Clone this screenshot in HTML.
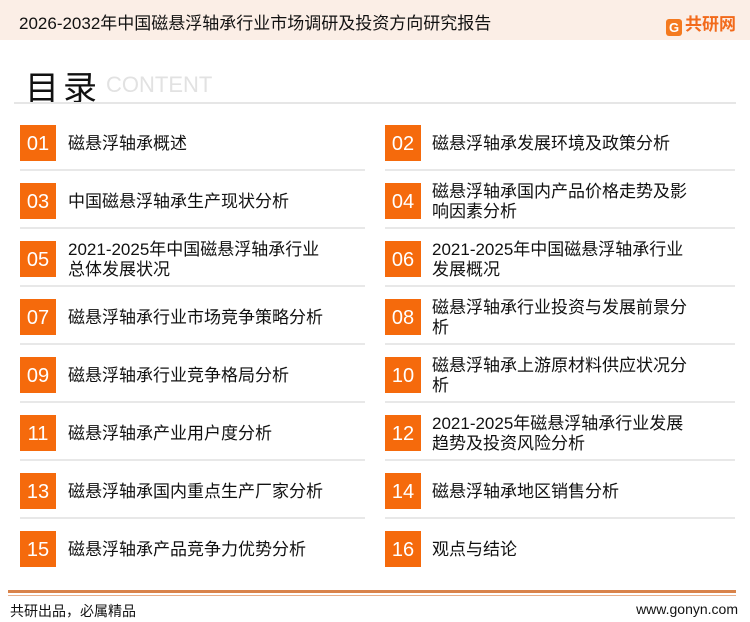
<!DOCTYPE html>
<html><head><meta charset="utf-8"><style>
*{margin:0;padding:0;box-sizing:border-box}
body{width:750px;height:622px;background:#fff;font-family:"Liberation Sans","Noto Sans CJK SC",sans-serif;position:relative;overflow:hidden;color:#111}
.hdr{position:absolute;left:0;top:0;width:750px;height:40px;background:#fbeee6}
.hdr .t{position:absolute;left:19px;top:9px;font-size:17px;color:#111;white-space:nowrap}
.logo{position:absolute;left:666px;top:10px;font-size:17px;font-weight:bold;color:#f26a1b}
.logo i{display:inline-block;width:16px;height:17px;background:#f47a1f;border-radius:3px;vertical-align:-2px;margin-right:3px;color:#fff;font-style:normal;font-size:13px;text-align:center;line-height:17px}
.ttl{position:absolute;left:25px;top:61px;font-size:34px;letter-spacing:4px;color:#111}
.ct{position:absolute;left:106px;top:72px;font-size:22px;color:#e2e2e2}
.hl{position:absolute;left:14px;top:102px;width:722px;height:2px;background:#e6e6e6}
.box{position:absolute;width:36px;height:36px;background:#f56a0c;color:#fff;font-size:20px;text-align:center;line-height:38px}
.tx{position:absolute;font-size:17px;line-height:20px;color:#111;white-space:nowrap}
.sep{position:absolute;height:2px;background:#e8e8e8}
.fl1{position:absolute;left:8px;top:590px;width:728px;height:3px;background:#d9834a}
.fl2{position:absolute;left:8px;top:595px;width:728px;height:1px;background:#e8b08c}
.ft{position:absolute;top:601px;font-size:14px;color:#111}
</style></head><body>
<div class="hdr"><div class="t">2026-2032年中国磁悬浮轴承行业市场调研及投资方向研究报告</div><div class="logo"><i>G</i>共研网</div></div>
<div class="ttl">目录</div><div class="ct">CONTENT</div>
<div class="hl"></div>

<div class="box" style="left:20px;top:125px">01</div><div class="tx" style="left:68px;top:134px">磁悬浮轴承概述</div>
<div class="box" style="left:385px;top:125px">02</div><div class="tx" style="left:432px;top:134px">磁悬浮轴承发展环境及政策分析</div>
<div class="sep" style="left:20px;top:169px;width:345px"></div><div class="sep" style="left:385px;top:169px;width:350px"></div>

<div class="box" style="left:20px;top:183px">03</div><div class="tx" style="left:68px;top:192px">中国磁悬浮轴承生产现状分析</div>
<div class="box" style="left:385px;top:183px">04</div><div class="tx" style="left:432px;top:182px">磁悬浮轴承国内产品价格走势及影<br>响因素分析</div>
<div class="sep" style="left:20px;top:227px;width:345px"></div><div class="sep" style="left:385px;top:227px;width:350px"></div>

<div class="box" style="left:20px;top:241px">05</div><div class="tx" style="left:68px;top:240px">2021-2025年中国磁悬浮轴承行业<br>总体发展状况</div>
<div class="box" style="left:385px;top:241px">06</div><div class="tx" style="left:432px;top:240px">2021-2025年中国磁悬浮轴承行业<br>发展概况</div>
<div class="sep" style="left:20px;top:285px;width:345px"></div><div class="sep" style="left:385px;top:285px;width:350px"></div>

<div class="box" style="left:20px;top:299px">07</div><div class="tx" style="left:68px;top:308px">磁悬浮轴承行业市场竞争策略分析</div>
<div class="box" style="left:385px;top:299px">08</div><div class="tx" style="left:432px;top:298px">磁悬浮轴承行业投资与发展前景分<br>析</div>
<div class="sep" style="left:20px;top:343px;width:345px"></div><div class="sep" style="left:385px;top:343px;width:350px"></div>

<div class="box" style="left:20px;top:357px">09</div><div class="tx" style="left:68px;top:366px">磁悬浮轴承行业竞争格局分析</div>
<div class="box" style="left:385px;top:357px">10</div><div class="tx" style="left:432px;top:356px">磁悬浮轴承上游原材料供应状况分<br>析</div>
<div class="sep" style="left:20px;top:401px;width:345px"></div><div class="sep" style="left:385px;top:401px;width:350px"></div>

<div class="box" style="left:20px;top:415px">11</div><div class="tx" style="left:68px;top:424px">磁悬浮轴承产业用户度分析</div>
<div class="box" style="left:385px;top:415px">12</div><div class="tx" style="left:432px;top:414px">2021-2025年磁悬浮轴承行业发展<br>趋势及投资风险分析</div>
<div class="sep" style="left:20px;top:459px;width:345px"></div><div class="sep" style="left:385px;top:459px;width:350px"></div>

<div class="box" style="left:20px;top:473px">13</div><div class="tx" style="left:68px;top:482px">磁悬浮轴承国内重点生产厂家分析</div>
<div class="box" style="left:385px;top:473px">14</div><div class="tx" style="left:432px;top:482px">磁悬浮轴承地区销售分析</div>
<div class="sep" style="left:20px;top:517px;width:345px"></div><div class="sep" style="left:385px;top:517px;width:350px"></div>

<div class="box" style="left:20px;top:531px">15</div><div class="tx" style="left:68px;top:540px">磁悬浮轴承产品竞争力优势分析</div>
<div class="box" style="left:385px;top:531px">16</div><div class="tx" style="left:432px;top:540px">观点与结论</div>

<div class="fl1"></div><div class="fl2"></div>
<div class="ft" style="left:10px">共研出品，必属精品</div>
<div class="ft" style="right:12px">www.gonyn.com</div>
</body></html>
